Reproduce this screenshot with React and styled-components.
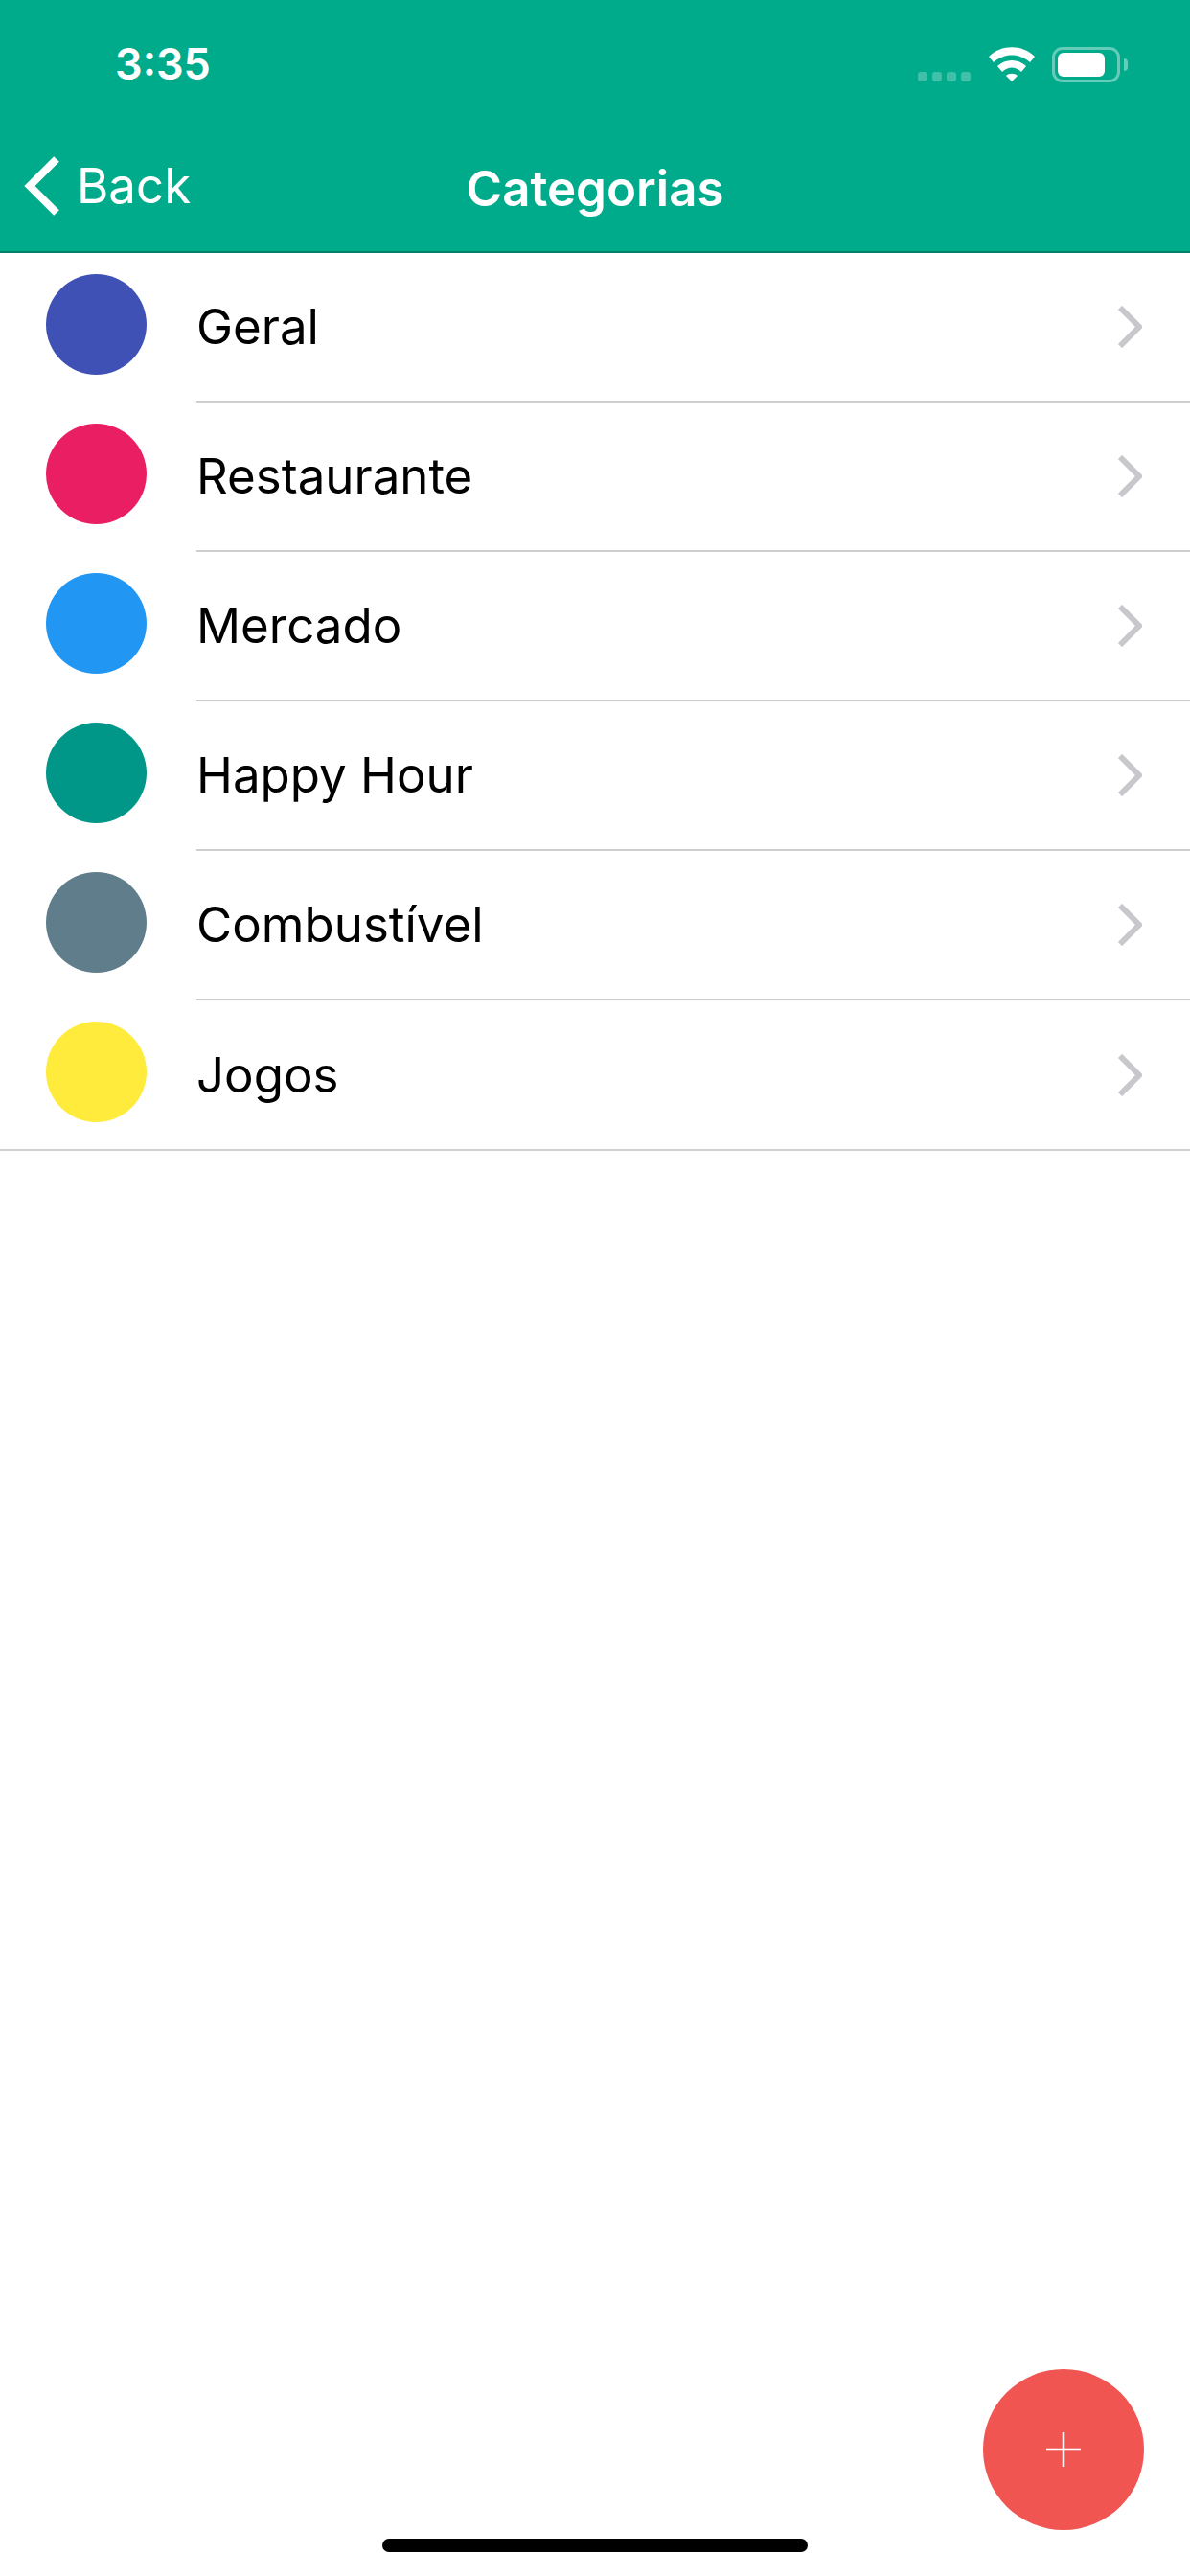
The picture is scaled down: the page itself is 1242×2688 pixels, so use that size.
import styled, { createGlobalStyle } from "styled-components";

const GlobalStyle = createGlobalStyle`
  html, body {
    margin: 0;
    padding: 0;
    background: #fff;
  }
  * {
    box-sizing: border-box;
  }
`;

const Screen = styled.div`
  position: relative;
  width: 1242px;
  height: 2688px;
  overflow: hidden;
  background: #fff;
  font-family: Inter, "Liberation Sans", sans-serif;
`;

const Header = styled.header`
  height: 264px;
  background: #00ab8c;
  border-bottom: 2px solid #00806a;
  color: #fff;
`;

const StatusBar = styled.div`
  height: 132px;
  display: flex;
  align-items: flex-start;
  justify-content: space-between;
  padding: 44px 65px 0 120px;
`;

const Time = styled.span`
  font-size: 45px;
  font-weight: 600;
  line-height: 46px;
`;

const StatusIcons = styled.div`
  display: flex;
  align-items: flex-start;
  padding-top: 5px;
`;

const SignalDots = styled.div`
  display: flex;
  gap: 5px;
  margin: 26px 19px 0 0;
`;

const SignalDot = styled.i`
  width: 10px;
  height: 10px;
  border-radius: 3px;
  background: rgba(255, 255, 255, 0.25);
`;

const Battery = styled.div`
  width: 71px;
  height: 37px;
  margin-left: 18px;
  padding: 3px;
  border: 3px solid rgba(255, 255, 255, 0.4);
  border-radius: 11px;
`;

const BatteryFill = styled.div`
  width: 49px;
  height: 25px;
  border-radius: 6px;
  background: #fff;
`;

const BatteryCap = styled.div`
  width: 4px;
  height: 13px;
  margin: 12px 0 0 4px;
  border-radius: 0 4px 4px 0;
  background: rgba(255, 255, 255, 0.4);
`;

const NavBar = styled.nav`
  position: relative;
  height: 130px;
  display: flex;
  align-items: center;
  justify-content: center;
`;

const BackButton = styled.div`
  position: absolute;
  left: 24px;
  top: 31px;
  display: flex;
  align-items: center;
  gap: 17px;
  font-size: 51px;
  line-height: 62px;
`;

const NavTitle = styled.h1`
  margin: 0;
  font-size: 51px;
  font-weight: 600;
  line-height: 62px;
`;

const List = styled.ul`
  list-style: none;
  margin: 0;
  padding: 0;
  border-bottom: 2px solid #cfcfd2;
`;

const Row = styled.li`
  height: 156px;
  display: flex;
  align-items: flex-start;
  padding-left: 48px;

  &:last-child {
    height: 155px;
  }
`;

const Dot = styled.span`
  flex: none;
  width: 105px;
  height: 105px;
  margin-top: 22px;
  border-radius: 50%;
  background: ${(props) => props.color};
`;

const RowBody = styled.div`
  flex: 1;
  height: 100%;
  margin-left: 52px;
  display: flex;
  align-items: center;
  justify-content: space-between;
  padding-right: 50px;
  border-bottom: ${(props) => (props.last ? "none" : "2px solid #cfcfd2")};
`;

const RowLabel = styled.span`
  font-size: 51px;
  line-height: 62px;
  color: #000;
`;

const Fab = styled.button`
  position: absolute;
  left: 1026px;
  top: 2472px;
  width: 168px;
  height: 168px;
  padding: 0;
  border: none;
  border-radius: 50%;
  background: #f15552;
  display: flex;
  align-items: center;
  justify-content: center;
`;

const HomeIndicator = styled.div`
  position: absolute;
  left: 399px;
  top: 2649px;
  width: 444px;
  height: 14px;
  border-radius: 7px;
  background: #000;
`;

const categories = [
  { name: "Geral", color: "#3f51b5" },
  { name: "Restaurante", color: "#e91e63" },
  { name: "Mercado", color: "#2196f3" },
  { name: "Happy Hour", color: "#009688" },
  { name: "Combustível", color: "#607d8b" },
  { name: "Jogos", color: "#ffeb3b" },
];

function WifiIcon() {
  return (
    <svg width="48" height="36" viewBox="0 0 48 36" fill="#fff">
      <path d="M0 10C13-3 35-3 48 10L43 16C32 6 16 6 5 16Z" />
      <path d="M9 20C17 12 31 12 39 20L34 26C28 20 20 20 14 26Z" />
      <path d="M18 30C21 27 27 27 30 30L24 36Z" />
    </svg>
  );
}

function BackChevron() {
  return (
    <svg width="39" height="62" viewBox="0 0 39 62" fill="none">
      <path d="M35 3 7 31 35 59" stroke="#fff" strokeWidth="8" />
    </svg>
  );
}

function RowChevron() {
  return (
    <svg width="26" height="44" viewBox="0 0 26 44" fill="none">
      <path d="M3 2 23 22 3 42" stroke="#c7c7cc" strokeWidth="6" />
    </svg>
  );
}

function PlusIcon() {
  return (
    <svg width="36" height="36" viewBox="0 0 36 36" stroke="#fff" strokeWidth="2.5">
      <path d="M18 0V36M0 18H36" />
    </svg>
  );
}

export default function App() {
  return (
    <Screen>
      <GlobalStyle />
      <Header>
        <StatusBar>
          <Time>3:35</Time>
          <StatusIcons>
            <SignalDots>
              <SignalDot />
              <SignalDot />
              <SignalDot />
              <SignalDot />
            </SignalDots>
            <WifiIcon />
            <Battery>
              <BatteryFill />
            </Battery>
            <BatteryCap />
          </StatusIcons>
        </StatusBar>
        <NavBar>
          <BackButton>
            <BackChevron />
            Back
          </BackButton>
          <NavTitle>Categorias</NavTitle>
        </NavBar>
      </Header>
      <List>
        {categories.map((category, index) => (
          <Row key={category.name}>
            <Dot color={category.color} />
            <RowBody last={index === categories.length - 1}>
              <RowLabel>{category.name}</RowLabel>
              <RowChevron />
            </RowBody>
          </Row>
        ))}
      </List>
      <Fab aria-label="Adicionar">
        <PlusIcon />
      </Fab>
      <HomeIndicator />
    </Screen>
  );
}
